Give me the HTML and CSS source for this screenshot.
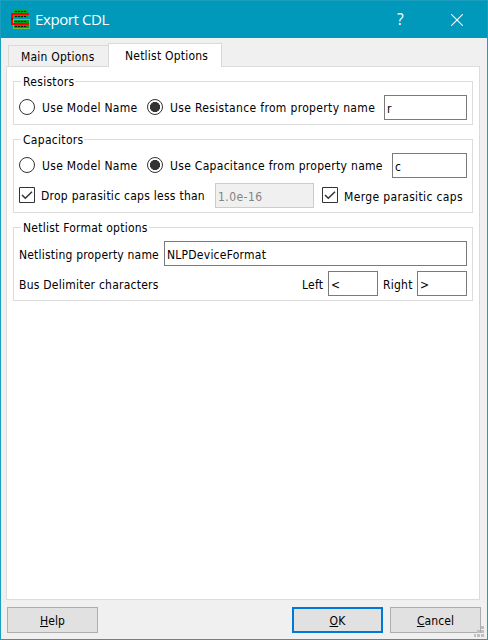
FILE: index.html
```html
<!DOCTYPE html>
<html lang="en">
<head>
<meta charset="utf-8">
<title>Export CDL</title>
<link rel="stylesheet" href="styles.css">
</head>
<body>
<div class="window">
  <header class="titlebar">
    <svg class="app-icon" width="19" height="19" viewBox="0 0 19 19" shape-rendering="crispEdges">
      <path fill="#00a820" d="M3 0h14v8H3z"/>
      <path fill="#75bd45" d="M2 9h17v10H2z"/>
      <path fill="#009b20" d="M3 10h15v8H3z"/>
      <path stroke="#101910" stroke-dasharray="2 1" d="M4 1.5h12M4 6.5h12M4 11.5h12M4 16.5h12"/>
      <path fill="none" stroke="#f00" stroke-width="2" d="M18 4H1v10h17"/>
      <path fill="#8b1010" d="M0 8h2v2H0z"/>
    </svg>
    <h1 class="title">Export CDL</h1>
    <span class="help-mark">?</span>
    <svg class="close" width="12" height="12" viewBox="0 0 12 12"><path d="M.3.3l11.4 11.4M11.7.3L.3 11.7" stroke="#fff" stroke-width="1.1"/></svg>
  </header>
  <main class="content">
    <nav class="tabs">
      <div class="tab">Main Options</div>
      <div class="tab active">Netlist Options</div>
    </nav>
    <section class="pane">
      <fieldset class="group resistors">
        <legend>Resistors</legend>
        <div class="row">
          <span class="radio"></span><label class="model">Use Model Name</label>
          <span class="radio on"></span><label class="grow resistance">Use Resistance from property name</label>
          <div class="field w83">r</div>
        </div>
      </fieldset>
      <fieldset class="group capacitors">
        <legend>Capacitors</legend>
        <div class="row">
          <span class="radio"></span><label class="model">Use Model Name</label>
          <span class="radio on"></span><label class="grow">Use Capacitance from property name</label>
          <div class="field w75">c</div>
        </div>
        <div class="row">
          <svg class="check" width="16" height="16" viewBox="0 0 16 16"><path class="box" d="M.5.5h15v15H.5z"/><path class="tick" d="M3 8l3.3 3.3L13 4.8"/></svg>
          <label class="drop">Drop parasitic caps less than</label>
          <div class="field w99 disabled">1.0e-16</div>
          <svg class="check second" width="16" height="16" viewBox="0 0 16 16"><path class="box" d="M.5.5h15v15H.5z"/><path class="tick" d="M3 8l3.3 3.3L13 4.8"/></svg>
          <label class="merge">Merge parasitic caps</label>
        </div>
      </fieldset>
      <fieldset class="group format">
        <legend>Netlist Format options</legend>
        <div class="row">
          <label class="prop">Netlisting property name</label>
          <div class="field fill">NLPDeviceFormat</div>
        </div>
        <div class="row">
          <label class="bus">Bus Delimiter characters</label>
          <label class="left">Left</label><div class="field w50">&lt;</div>
          <label class="right">Right</label><div class="field w50">&gt;</div>
        </div>
      </fieldset>
    </section>
    <footer class="buttons">
      <div class="button"><span><u>H</u>elp</span></div>
      <div class="button default"><span><u>O</u>K</span></div>
      <div class="button"><span><u>C</u>ancel</span></div>
    </footer>
    <svg class="grip" width="10" height="11" viewBox="0 0 10 11"><path fill="#bfbfbf" d="M7 0h3v3H7zM3 4h3v3H3zM7 4h3v3H7zM0 8h2v3H0zM3 8h3v3H3zM7 8h3v3H7z"/></svg>
  </main>
</div>
</body>
</html>
```
FILE: styles.css
```css
* { box-sizing: border-box; }
body {
  margin: 0;
  font: 12px/16px "DejaVu Sans Condensed", "DejaVu Sans", sans-serif;
  letter-spacing: .3px;
  color: #000;
}
.window {
  position: relative;
  width: 488px;
  height: 640px;
  border: 1px solid #1a9fbe;
  background: #f0f0f0;
  display: flex;
  flex-direction: column;
  overflow: hidden;
}
.titlebar {
  height: 37px;
  flex: none;
  background: #0099bc;
  display: flex;
  align-items: center;
  padding: 0 24px 0 10px;
  color: #fff;
}
.title {
  margin: 0 0 2px 5px;
  flex: 1;
  font: 15px/20px "Open Sans", sans-serif;
  letter-spacing: -.4px;
}
.help-mark { font: 15.5px/20px "Open Sans", sans-serif; margin: 0 47px 2px 0; }
.close { margin-right: 0; }
.content { flex: 1; display: flex; flex-direction: column; padding: 5px 6px 6px 5px; }
.tabs { height: 24px; display: flex; align-items: flex-end; padding-left: 2px; z-index: 1; letter-spacing: .22px; }
.tab {
  width: 101px;
  height: 22px;
  border: 1px solid #d9d9d9;
  padding: 3px 0 0 12px;
  white-space: nowrap;
}
.active {
  width: 114px;
  height: 24px;
  margin-left: -1px;
  padding: 4px 0 0 16px;
  background: #fff;
  border-bottom: 0;
}
.pane {
  height: 534px;
  margin-top: -1px;
  width: 474px;
  border: 1px solid #dcdcdc;
  background: #fff;
  padding: 7px 6px;
}
.group {
  margin: 0;
  min-width: 0;
  border: 1px solid #dcdcdc;
  padding: 6px 5px 0;
  width: 460px;
}
.group legend { padding: 0 1px 0 2px; margin: 0 0 0 2px; height: 15px; white-space: nowrap; }
.resistors { height: 51px; }
.capacitors { height: 81px; margin-top: 7px; }
.format { height: 81px; margin-top: 7px; letter-spacing: .24px; }
.row { display: flex; align-items: flex-start; height: 25px; margin-bottom: 5px; white-space: nowrap; }
.row label { margin-top: 5px; }
.row .merge, .format .row label { margin-top: 6px; }
.row .merge { letter-spacing: .35px; }
.radio {
  flex: none;
  width: 16px;
  height: 16px;
  border: 1px solid #333;
  border-radius: 50%;
  margin: 4px 7px 0 0;
}
.radio.on { background: radial-gradient(circle, #333 4.8px, transparent 5.3px); }
.model { width: 105px; }
.grow { flex: 1; }
.resistance { letter-spacing: .34px; }
.field {
  flex: none;
  height: 25px;
  border: 1px solid #7a7a7a;
  background: #fff;
  padding: 5px 0 0 2px;
}
.disabled { background: #f0f0f0; border-color: #ccc; color: #838383; letter-spacing: .45px; }
.w83 { width: 83px; }
.w75 { width: 75px; }
.w99 { width: 99px; }
.w50 { width: 50px; }
.fill { flex: 1; }
.check { flex: none; margin-top: 4px; }
.check path { fill: none; stroke: #333; }
.check .tick { stroke-width: 1.5; }
.drop { width: 174px; margin-left: 6px; letter-spacing: .26px; }
.second { margin: 4px 6px 0 8px; }
.prop { width: 145px; letter-spacing: .2px; }
.bus { width: 283px; }
.left { width: 26px; }
.row .right { width: 34px; margin-left: 5px; }
.buttons { display: flex; padding: 7px 0 0 1px; }
.button {
  flex: none;
  width: 91px;
  height: 26px;
  background: #e1e1e1;
  border: 1px solid #adadad;
  text-align: center;
  padding-top: 5px;
  letter-spacing: .1px;
}
.button u { text-underline-offset: 1px; }
.default { margin: 0 7px 0 194px; border: 2px solid #0078d7; padding-top: 4px; }
.grip { position: absolute; right: 3px; bottom: 2px; }
```
